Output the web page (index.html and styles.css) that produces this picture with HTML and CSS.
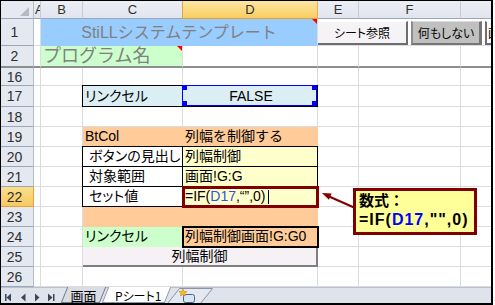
FILE: index.html
```html
<!DOCTYPE html>
<html lang="ja">
<head>
    <meta charset="UTF-8">
    <title>StiLLシステムテンプレート - Pシート1</title>
    <link rel="stylesheet" href="styles.css">
</head>
<body>
<div class="window">
    <div class="sheet">
        <div class="row hdr">
            <div class="corner"><span class="corner-tri"></span></div>
            <div class="ch col-a">A</div>
            <div class="ch">B</div>
            <div class="ch">C</div>
            <div class="ch ch-active">D</div>
            <div class="ch">E</div>
            <div class="ch">F</div>
            <div class="ch ch-last"></div>
        </div>

        <div class="row r1">
            <div class="rh">1</div>
            <div class="c"></div>
            <div class="c title">StiLLシステムテンプレート<span class="note-mark"></span></div>
            <div class="c buttons">
                <button class="btn">シート参照</button>
                <button class="btn btn-gray">何もしない</button>
                <button class="btn btn-cut">画面</button>
            </div>
        </div>

        <div class="row r2">
            <div class="rh">2</div>
            <div class="c"></div>
            <div class="c prog-name">プログラム名<span class="note-mark"></span></div>
            <div class="c"></div>
            <div class="c"></div>
            <div class="c"></div>
            <div class="c"></div>
        </div>

        <div class="row r16">
            <div class="rh">16</div>
            <div class="c"></div><div class="c"></div><div class="c"></div>
            <div class="c"></div><div class="c"></div><div class="c"></div><div class="c"></div>
        </div>

        <div class="row r17">
            <div class="rh">17</div>
            <div class="c"></div>
            <div class="c"></div>
            <div class="c bd fill-sky label">リンクセル</div>
            <div class="c bd fill-sky center linked">
                FALSE
                <span class="sel-box">
                    <span class="handle h-tl"></span><span class="handle h-tr"></span>
                    <span class="handle h-bl"></span><span class="handle h-br"></span>
                </span>
            </div>
            <div class="c"></div>
            <div class="c"></div>
            <div class="c"></div>
        </div>

        <div class="row">
            <div class="rh">18</div>
            <div class="c"></div><div class="c"></div><div class="c"></div>
            <div class="c"></div><div class="c"></div><div class="c"></div><div class="c"></div>
        </div>

        <div class="row">
            <div class="rh">19</div>
            <div class="c"></div>
            <div class="c"></div>
            <div class="c fill-orange">BtCol</div>
            <div class="c fill-orange">列幅を制御する</div>
            <div class="c"></div>
            <div class="c"></div>
            <div class="c"></div>
        </div>

        <div class="row">
            <div class="rh">20</div>
            <div class="c"></div>
            <div class="c"></div>
            <div class="c bd label indent">ボタンの見出し</div>
            <div class="c bd fill-yellow">列幅制御</div>
            <div class="c"></div>
            <div class="c"></div>
            <div class="c"></div>
        </div>

        <div class="row">
            <div class="rh">21</div>
            <div class="c"></div>
            <div class="c"></div>
            <div class="c bd label indent">対象範囲</div>
            <div class="c bd fill-yellow">画面!G:G</div>
            <div class="c"></div>
            <div class="c"></div>
            <div class="c"></div>
        </div>

        <div class="row">
            <div class="rh rh-active">22</div>
            <div class="c"></div>
            <div class="c"></div>
            <div class="c bd label indent">セット値</div>
            <div class="c bd fill-yellow active-cell">=IF(<span class="ref">D17</span>,“”,0)<span class="caret"></span></div>
            <div class="c"></div>
            <div class="c"></div>
            <div class="c"></div>
        </div>

        <div class="row">
            <div class="rh">23</div>
            <div class="c"></div>
            <div class="c"></div>
            <div class="c fill-orange"></div>
            <div class="c fill-orange"></div>
            <div class="c"></div>
            <div class="c"></div>
            <div class="c"></div>
        </div>

        <div class="row">
            <div class="rh">24</div>
            <div class="c"></div>
            <div class="c"></div>
            <div class="c fill-green label">リンクセル</div>
            <div class="c fill-orange thick">列幅制御画面!G:G0</div>
            <div class="c"></div>
            <div class="c"></div>
            <div class="c"></div>
        </div>

        <div class="row">
            <div class="rh">25</div>
            <div class="c"></div>
            <div class="c"></div>
            <div class="c sheet-btn">列幅制御</div>
            <div class="c"></div>
            <div class="c"></div>
            <div class="c"></div>
        </div>

        <div class="row">
            <div class="rh">26</div>
            <div class="c"></div><div class="c"></div><div class="c"></div>
            <div class="c"></div><div class="c"></div><div class="c"></div><div class="c"></div>
        </div>
    </div>

    <div class="tabs">
        <svg class="tab-nav" width="58" height="16" viewBox="0 0 58 16">
            <rect x="4" y="6" width="1.5" height="7" fill="#3b4656"/>
            <polygon points="10,5.5 5.5,9.5 10,13.5" fill="#3b4656"/>
            <polygon points="24.5,5.5 20,9.5 24.5,13.5" fill="#3b4656"/>
            <polygon points="34,5.5 38.5,9.5 34,13.5" fill="#3b4656"/>
            <polygon points="47,5.5 51.5,9.5 47,13.5" fill="#3b4656"/>
            <rect x="52" y="6" width="1.5" height="7" fill="#3b4656"/>
        </svg>
        <div class="tab">画面</div>
        <div class="tab tab-active">Pシート1</div>
        <svg class="tab-new" width="48" height="16" viewBox="0 0 48 16">
            <polygon points="0.5,15.5 12.5,0.5 45.5,0.5 33.5,15.5" fill="#e4e8f0" stroke="#8a94a6"/>
            <rect x="16.5" y="6.5" width="11" height="8" rx="2" fill="#d6e6f6" stroke="#4c6384"/>
            <polygon points="16,1 17.2,3.5 20,3.6 17.8,5.2 18.6,8 16,6.4 13.4,8 14.2,5.2 12,3.6 14.8,3.5" fill="#f6c120" stroke="#d08a10" stroke-width="0.6"/>
        </svg>
    </div>

    <svg class="arrow" width="40" height="24" viewBox="0 0 40 24">
        <line x1="10" y1="8" x2="36" y2="19.5" stroke="#800000" stroke-width="2"/>
        <polygon points="4,5 13.6,5.4 10.9,11.8" fill="#800000"/>
    </svg>
    <div class="callout">
        <div class="callout-title">数式：</div>
        <div class="callout-formula">=IF(<span class="ref-strong">D17</span>,"",0)</div>
    </div>
</div>
</body>
</html>
```

FILE: styles.css
```css
body {
    margin: 0;
    background: #fff;
    font-family: "Liberation Sans", "Noto Sans CJK JP", sans-serif;
}

.window {
    position: relative;
    width: 490px;
    height: 302px;
    border-style: solid;
    border-color: #000;
    border-width: 1px 2px 2px 1px;
    overflow: hidden;
    display: flex;
    flex-direction: column;
}

.sheet {
    display: flex;
    flex-direction: column;
}

.row {
    display: grid;
    grid-template-columns: 33px 7px 42px 100px 135px 41px 102px 30px;
    height: 20px;
}

.row > * {
    box-sizing: border-box;
    min-width: 0;
}

.hdr { height: 18px; }
.r1 { height: 27px; }
.r2 { height: 22px; }
.r16 { height: 18px; }
.r17 { height: 21px; }

/* headers */
.corner {
    position: relative;
    background: #e6e9f1;
    border-right: 1px solid #b6bdca;
    border-bottom: 1px solid #9ba7b9;
}

.corner-tri {
    position: absolute;
    right: 4px;
    bottom: 2px;
    width: 0;
    height: 0;
    border-left: 9px solid transparent;
    border-bottom: 9px solid #b4b9c4;
}

.ch {
    display: flex;
    align-items: center;
    justify-content: center;
    background: linear-gradient(#eceef5, #e2e5ee);
    border-right: 1px solid #c6cbd6;
    border-bottom: 1px solid #9ba7b9;
    font-size: 13px;
    color: #2f2f2f;
    overflow: hidden;
}

.col-a {
    justify-content: flex-start;
    padding-left: 1px;
}

.ch-active {
    background: linear-gradient(#fde7a2, #f8cd62);
    border-bottom-color: #e6a33a;
    border-right-color: #e0b060;
    box-shadow: -1px 0 0 #d6a84c;
}

.ch-last { border-right: none; }

.rh {
    display: flex;
    align-items: center;
    justify-content: center;
    padding-right: 5px;
    background: #e4e8f1;
    border-right: 1px solid #b6bdca;
    border-bottom: 1px solid #9ba7b9;
    font-size: 14px;
    color: #2f2f2f;
}

.rh-active {
    background: linear-gradient(#fbdf8c, #f6c95e);
    border-bottom-color: #e6a33a;
    border-right-color: #e6a33a;
}

/* cells */
.c {
    display: flex;
    align-items: center;
    padding-left: 2px;
    border-right: 1px solid #dadcdd;
    border-bottom: 1px solid #dadcdd;
    font-size: 14px;
    line-height: 17px;
    white-space: nowrap;
    color: #000;
}

.c:last-child { border-right: none; }

.r2 > * { border-bottom: 2px solid #8e8e8e; }

.center { justify-content: center; }
.label { font-feature-settings: "palt"; }
.indent { padding-left: 6px; }

.fill-sky { background: #dbeef4; }
.fill-yellow { background: #ffffcc; }
.fill-orange { background: #ffcc99; border-color: #ffcc99; }
.fill-green { background: #ccffcc; border-color: #ccffcc; }

.bd {
    border-right-color: #000;
    border-bottom-color: #000;
    box-shadow: -1px 0 0 #000, 0 -1px 0 #000, -1px -1px 0 #000;
}

.title {
    grid-column: span 3;
    position: relative;
    justify-content: center;
    padding-left: 0;
    background: #99ccff;
    border-bottom-color: #99ccff;
    font-size: 16px;
    color: #808080;
}

.prog-name {
    grid-column: span 2;
    position: relative;
    background: #ccffcc;
    font-size: 18px;
    line-height: 20px;
    color: #808080;
}

.r2 .prog-name { border-bottom-color: #8e8e8e; }

.note-mark {
    position: absolute;
    top: 0;
    right: 0;
    width: 0;
    height: 0;
    border-left: 5px solid transparent;
    border-top: 5px solid #ff0000;
}

.buttons {
    grid-column: span 3;
    align-items: flex-start;
    gap: 3px;
    padding: 2px 0 0;
    overflow: hidden;
}

.btn {
    flex: none;
    height: 24px;
    margin: 0;
    padding: 0;
    font-family: "Noto Sans CJK JP", sans-serif;
    font-size: 12px;
    font-feature-settings: "palt";
    color: #000;
    background: #f6f3f6;
    border-style: solid;
    border-width: 1px 2px 2px 1px;
    border-color: #ffffff #6e6e6e #6e6e6e #ffffff;
}

.btn:first-child {
    width: 91px;
    margin-left: -1px;
}

.btn-gray {
    width: 71px;
    background: #c0c0c0;
    border-width: 1px 3px 2px 2px;
    border-color: #d9d9d9 #767676 #767676 #8c8c8c;
}

.btn-cut {
    width: 40px;
    background: #faf8fa;
    border-width: 1px 1px 2px 2px;
    border-color: #ffffff #6e6e6e #6e6e6e #6e6e6e;
    text-align: left;
    padding-left: 1px;
}

/* linked cell with the selection frame of the control */
.linked { position: relative; }

.sel-box {
    position: absolute;
    left: -1px;
    top: -1px;
    right: 0;
    bottom: 0;
    border: 1px solid #0000ff;
}

.handle {
    position: absolute;
    width: 5px;
    height: 5px;
    background: #0000ff;
}

.h-tl { left: -1px; top: -1px; }
.h-tr { right: -1px; top: -1px; }
.h-bl { left: -1px; bottom: -1px; }
.h-br { right: -1px; bottom: -1px; }

.active-cell {
    position: relative;
    z-index: 2;
    outline: 3px solid #800000;
    outline-offset: -2px;
}

.ref { color: #2a55e6; }

.caret {
    display: inline-block;
    width: 1px;
    height: 14px;
    margin-left: 2px;
    background: #000;
}

.thick {
    position: relative;
    z-index: 1;
    outline: 2px solid #000;
    outline-offset: -1px;
}

.sheet-btn {
    grid-column: span 2;
    justify-content: center;
    padding-left: 0;
    background: #f5f1f5;
    border-right: 2px solid #7f7f7f;
    border-bottom: 2px solid #7f7f7f;
}

/* sheet tabs */
.tabs {
    flex: 1;
    display: flex;
    align-items: flex-start;
    background: #dfe3ec;
    border-top: 1px solid #b9c1cf;
}

.tab-nav { flex: none; }

.tab {
    position: relative;
    isolation: isolate;
    height: 15px;
    display: flex;
    align-items: center;
    font-family: "Noto Sans CJK JP", sans-serif;
    font-size: 13px;
    font-feature-settings: "palt";
    line-height: 15px;
    color: #000;
}

.tab::before {
    content: "";
    position: absolute;
    z-index: -1;
    top: -1px;
    bottom: 0;
    left: 2px;
    right: 2px;
    background: #d9dce3;
    border: 1px solid #6f7a8c;
    border-top: none;
    transform: skewX(-22deg);
}

.tab:first-of-type {
    width: 43px;
    margin-left: 3px;
    justify-content: center;
}

.tab-active {
    width: 55px;
    padding-left: 10px;
    font-size: 12px;
    z-index: 1;
}

.tab-active::before {
    background: #ffffff;
    border-color: #8a94a6;
    left: 0;
}

.tab-new {
    flex: none;
    margin-left: -3px;
}

/* callout */
.arrow {
    position: absolute;
    left: 317px;
    top: 187px;
}

.callout {
    position: absolute;
    left: 352px;
    top: 187px;
    width: 124px;
    height: 47px;
    box-sizing: border-box;
    padding-left: 3px;
    background: #ffff99;
    border: 3px solid #800000;
    font-weight: bold;
    color: #000;
}

.callout-title {
    font-family: "Noto Sans CJK JP", sans-serif;
    font-size: 15px;
    line-height: 18px;
}

.callout-formula {
    font-size: 16px;
    line-height: 22px;
    letter-spacing: 1px;
}

.ref-strong { color: #0000ff; }
```
